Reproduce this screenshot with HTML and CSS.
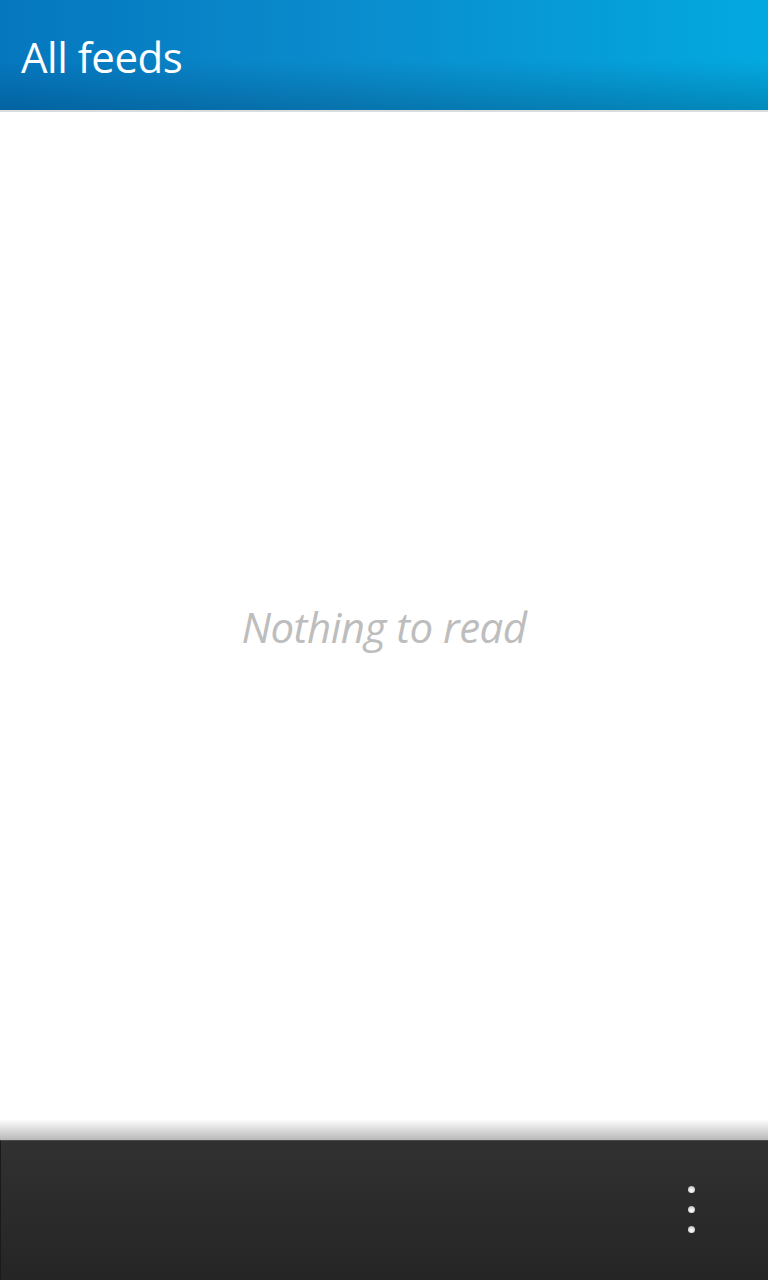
FILE: index.html
```html
<!DOCTYPE html>
<html>
<head>
<meta charset="utf-8">
<link rel="stylesheet" href="styles.css">
</head>
<body>
<div class="app">
  <header class="titlebar">
    <h1 class="title">All feeds</h1>
  </header>
  <main class="content">
    <p class="empty">Nothing to read</p>
  </main>
  <footer class="actionbar">
    <div class="overflow" aria-label="More actions">
      <span class="dot"></span>
      <span class="dot"></span>
      <span class="dot"></span>
    </div>
  </footer>
</div>
</body>
</html>
```
FILE: styles.css
```css
* { box-sizing: border-box; }
html, body { margin: 0; padding: 0; }
body {
  width: 768px;
  height: 1280px;
  overflow: hidden;
  background: #ffffff;
  font-family: "Open Sans", "DejaVu Sans", sans-serif;
}
.app {
  display: flex;
  flex-direction: column;
  height: 1280px;
}
.titlebar {
  height: 112px;
  flex: none;
  display: flex;
  align-items: center;
  padding: 2px 0 0 21px;
  background:
    linear-gradient(to bottom, rgba(0,0,0,0) 0%, rgba(0,0,0,0) 55%, rgba(0,30,60,0.22) 98%, rgba(0,30,60,0.22) 100%),
    linear-gradient(to right, #0577be 0%, #0a8ccd 45%, #03a9e0 100%);
  border-bottom: 2px solid #d9dde0;
}
.title {
  margin: 0;
  font-weight: 400;
  font-size: 42px;
  letter-spacing: -0.5px;
  color: #ffffff;
}
.content {
  flex: 1;
  display: flex;
  align-items: center;
  justify-content: center;
  padding-bottom: 1px;
}
.empty {
  margin: 0;
  font-style: italic;
  font-size: 42px;
  color: #bdbdbd;
  letter-spacing: -0.5px;
  transform: translateY(1px);
}
.actionbar {
  position: relative;
  height: 140px;
  flex: none;
  background: linear-gradient(to bottom, #313131, #252525);
  border-top: 1px solid #4a4a4a;
  border-left: 1px solid #1a1a1a;
  display: flex;
  justify-content: flex-end;
  align-items: flex-start;
  padding: 45px 73px 0 0;
}
.actionbar::before {
  content: "";
  position: absolute;
  left: -1px;
  right: 0;
  top: -22px;
  height: 21px;
  background: linear-gradient(to bottom, rgba(0,0,0,0), rgba(0,0,0,0.28));
}
.overflow {
  display: flex;
  flex-direction: column;
  gap: 13px;
}
.dot {
  width: 7px;
  height: 7px;
  border-radius: 50%;
  background: radial-gradient(circle at 50% 65%, #ffffff 0%, #dcdcdc 50%, #9a9a9a 100%);
}
```
